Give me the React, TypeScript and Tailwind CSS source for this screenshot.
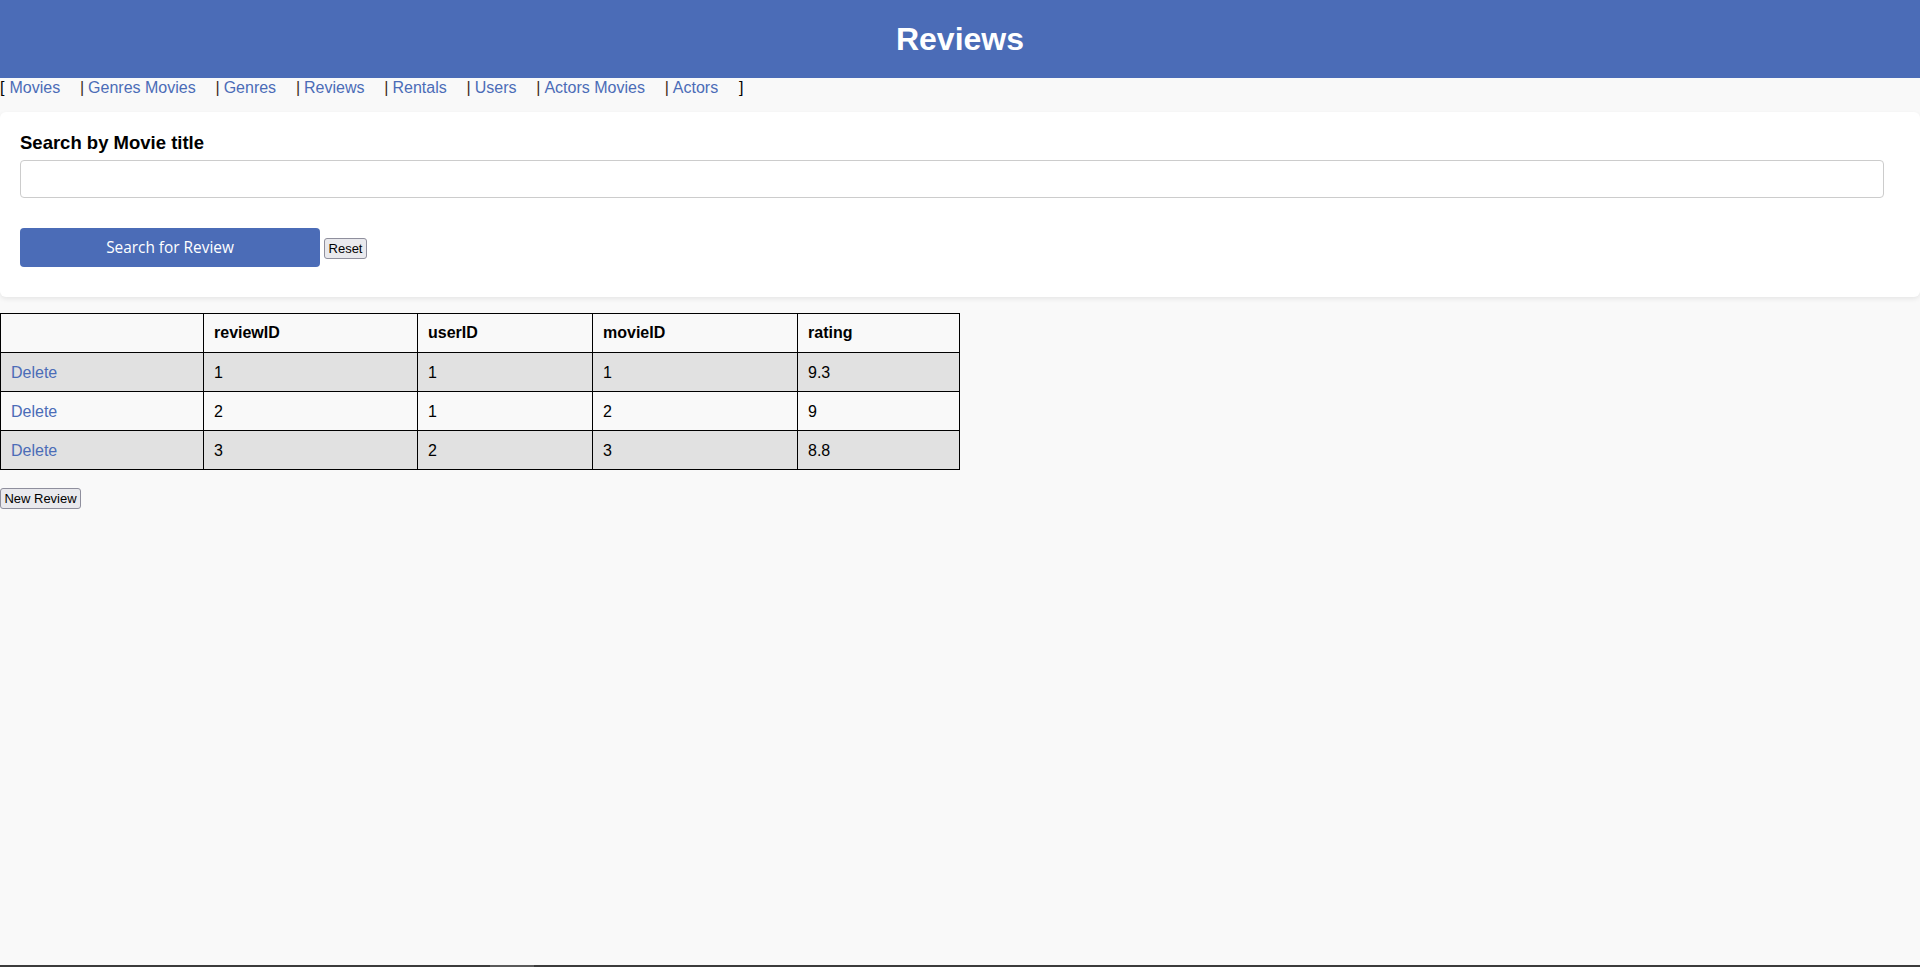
import React from 'react';

const links = ['Movies', 'Genres Movies', 'Genres', 'Reviews', 'Rentals', 'Users', 'Actors Movies', 'Actors'];

const reviews = [
  { reviewID: 1, userID: 1, movieID: 1, rating: '9.3' },
  { reviewID: 2, userID: 1, movieID: 2, rating: '9' },
  { reviewID: 3, userID: 2, movieID: 3, rating: '8.8' },
];

const App: React.FC = () => {
  return (
    <div className="relative min-h-screen bg-[#f9f9f9] text-black font-['Liberation_Sans',Arial,sans-serif]">
      {/* Header */}
      <header className="h-[78px] bg-[#4b6cb7] flex items-center justify-center">
        <h1 className="text-[32px] font-bold text-white leading-[37px]">Reviews</h1>
      </header>

      {/* Nav */}
      <nav className="h-[20px] text-[16px] leading-[20px] whitespace-nowrap">
        <span>[</span>
        <span className="inline-block w-[5px]" />
        {links.map((l, i) => (
          <React.Fragment key={l}>
            {i > 0 && <span className="mr-[4px] text-[#3d2a18]">|</span>}
            <a href="#" className="text-[#4b6cb7]">{l}</a>
            <span className="inline-block w-[19.8px]" />
          </React.Fragment>
        ))}
        <span className="ml-[1px]">]</span>
      </nav>

      {/* Search card */}
      <section className="mt-[14px] h-[185px] bg-white rounded-[6px] shadow-[0_2px_5px_rgba(0,0,0,0.08)] px-[20px] pt-[20px]">
        <label className="block text-[18.5px] leading-[21px] font-bold">Search by Movie title</label>
        <input
          type="text"
          className="mt-[7px] block w-[calc(100%-16px)] h-[38px] bg-white border border-[#cccccc] rounded-[4px] px-2 outline-none"
        />
        <div className="mt-[30px] flex items-center">
          <button className="w-[300px] h-[39px] bg-[#4b6cb7] text-white rounded-[4px] text-[15.4px] font-['Open_Sans',sans-serif]">
            Search for Review
          </button>
          <button className="ml-[4px] mt-[2px] w-[43px] h-[21px] bg-[#e9e9ed] border border-[#8f8f9d] rounded-[3px] text-[13px] leading-[19px] font-['Liberation_Sans',Arial,sans-serif]">
            Reset
          </button>
        </div>
      </section>

      {/* Table */}
      <table className="mt-[16px] w-[960px] table-fixed border-collapse text-[16px] leading-[18px]">
        <colgroup>
          <col className="w-[203px]" />
          <col className="w-[214px]" />
          <col className="w-[175px]" />
          <col className="w-[205px]" />
          <col className="w-[162px]" />
        </colgroup>
        <thead>
          <tr className="bg-[#f9f9f9]">
            <th className="border border-black px-[10px] py-[10px] text-left font-bold"></th>
            <th className="border border-black px-[10px] py-[10px] text-left font-bold">reviewID</th>
            <th className="border border-black px-[10px] py-[10px] text-left font-bold">userID</th>
            <th className="border border-black px-[10px] py-[10px] text-left font-bold">movieID</th>
            <th className="border border-black px-[10px] py-[10px] text-left font-bold">rating</th>
          </tr>
        </thead>
        <tbody>
          {reviews.map((r, i) => (
            <tr key={r.reviewID} className={i % 2 === 0 ? 'bg-[#e1e1e1]' : 'bg-[#f9f9f9]'}>
              <td className="border border-black px-[10px] pt-[11px] pb-[9px]">
                <a href="#" className="text-[#4b6cb7]">Delete</a>
              </td>
              <td className="border border-black px-[10px] pt-[11px] pb-[9px]">{r.reviewID}</td>
              <td className="border border-black px-[10px] pt-[11px] pb-[9px]">{r.userID}</td>
              <td className="border border-black px-[10px] pt-[11px] pb-[9px]">{r.movieID}</td>
              <td className="border border-black px-[10px] pt-[11px] pb-[9px]">{r.rating}</td>
            </tr>
          ))}
        </tbody>
      </table>

      <div className="mt-[16px]">
        <button className="w-[81px] h-[21px] bg-[#e9e9ed] border border-[#8f8f9d] rounded-[3px] text-[13px] leading-[19px] whitespace-nowrap">
          New Review
        </button>
      </div>

      {/* bottom strip */}
      <div className="fixed bottom-0 left-0 right-0 h-[2px] bg-[#3b3b3b]">
        <div className="absolute left-[490px] w-[44px] h-[2px] bg-[#5a5a5a]" />
      </div>
    </div>
  );
};

export default App;
